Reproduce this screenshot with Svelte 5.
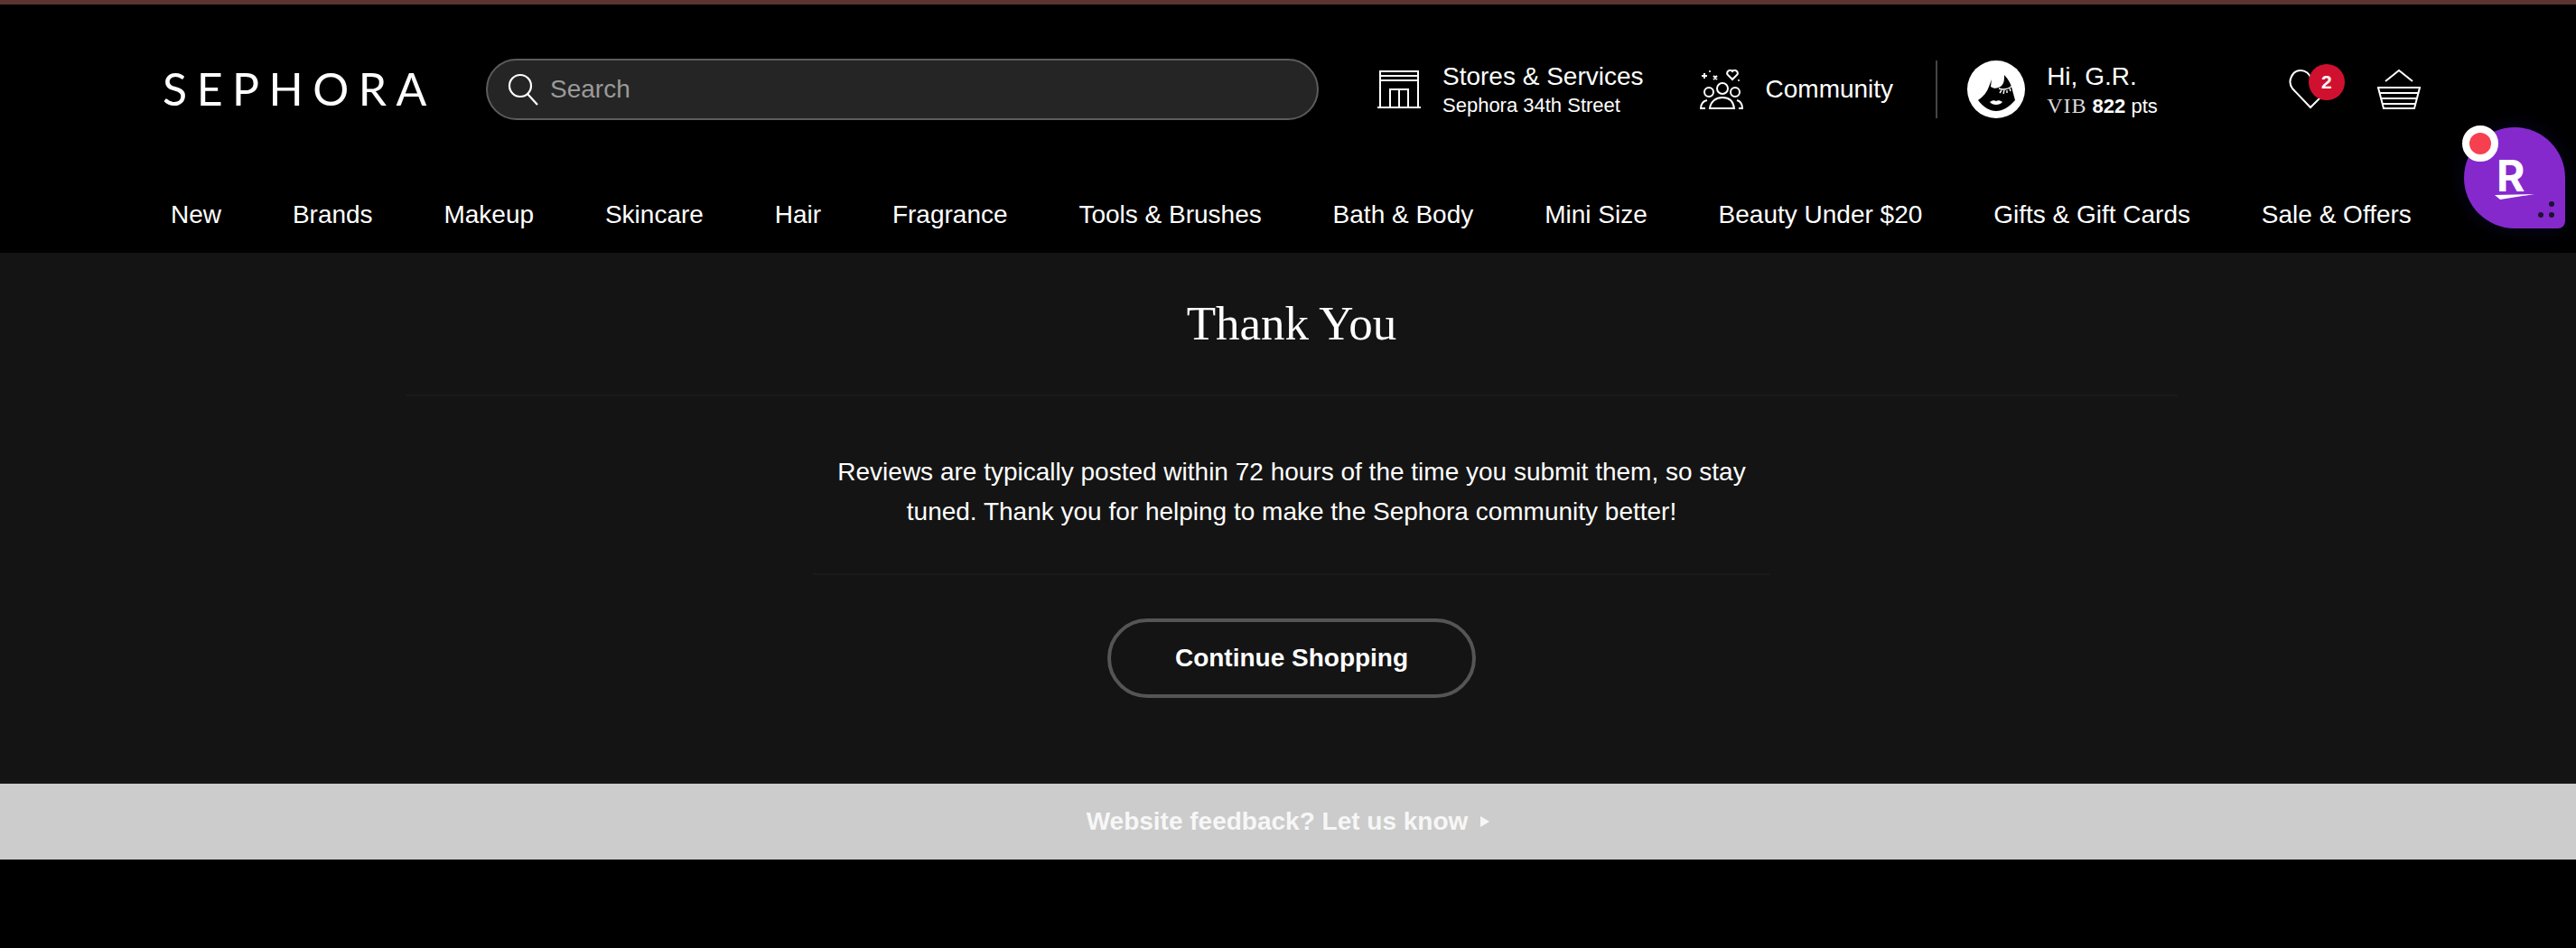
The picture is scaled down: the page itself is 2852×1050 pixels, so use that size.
<script>
  const navItems = [
    "New", "Brands", "Makeup", "Skincare", "Hair", "Fragrance", "Tools & Brushes",
    "Bath & Body", "Mini Size", "Beauty Under $20", "Gifts & Gift Cards", "Sale & Offers"
  ];
</script>

<div class="page">
  <header class="site-header">
    <div class="top-row">
      <div class="logo">SEPHORA</div>

      <div class="search">
        <svg class="search-icon" viewBox="0 0 34 36" width="34" height="36" fill="none" stroke="#fff" stroke-width="2.2">
          <circle cx="14" cy="14" r="12" />
          <path d="M22 23 L33 35" />
        </svg>
        <span class="placeholder">Search</span>
      </div>

      <div class="link stores">
        <svg viewBox="0 0 48 42" width="48" height="42" fill="none" stroke="#fff" stroke-width="2">
          <path d="M0 41 H48 M3 41 V1 H45 V41 M3 6 H45 M3 11 H45" />
          <path d="M14 41 V21 H34 V41 M24 21 V41" />
        </svg>
        <div class="link-text">
          <div class="link-main">Stores &amp; Services</div>
          <div class="link-sub">Sephora 34th Street</div>
        </div>
      </div>

      <div class="link community">
        <svg viewBox="0 0 48 44" width="48" height="44" fill="none" stroke="#fff" stroke-width="2">
          <path d="M2 7 H8 M5 4 V10 M15 7 L19 11 M19 7 L15 11" />
          <circle cx="11" cy="2" r="1" fill="#fff" stroke="none" />
          <circle cx="43" cy="12" r="1" fill="#fff" stroke="none" />
          <path d="M36 11 L30.5 5.5 A3.3 3.3 0 0 1 36 2 A3.3 3.3 0 0 1 41.5 5.5 Z" />
          <circle cx="10" cy="25" r="5" />
          <circle cx="25" cy="21" r="6" />
          <circle cx="39" cy="25" r="5" />
          <path d="M11 43 C12 35 18 31 25 31 C32 31 37 35 38 43 Z" />
          <path d="M6 43 H1 C1 38 4 35 8 34 M43 43 H47 C47 38 45 35 41 34" />
        </svg>
        <span class="link-main">Community</span>
      </div>

      <div class="vr"></div>

      <div class="link account">
        <svg viewBox="0 0 64 64" width="64" height="64">
          <circle cx="32" cy="32" r="32" fill="#fff" />
          <path d="M12 44 C18 40 22 35 24 29 L27 21 L26 29 C30 32 34 31 38 28 C41 25 41 21 41 16 C46 21 49 27 50 33 L53 44 C46 52 39 56 32 56 C25 56 18 52 12 44 Z" fill="#000" />
          <path d="M35 31 C40 33 45 32 50 28 M38 33 L36 36 M41 33 L40 37 M44 33 L44 36 M47 31 L48 34" fill="none" stroke="#fff" stroke-width="1.4" />
          <path d="M25 46 C28 44 30 44 32 45 C34 44 36 44 39 46 C36 50 28 50 25 46 Z" fill="#fff" />
        </svg>
        <div class="link-text">
          <div class="link-main">Hi, G.R.</div>
          <div class="link-sub"><span class="vib">VIB</span> <b>822</b> pts</div>
        </div>
      </div>

      <div class="heart">
        <svg viewBox="0 0 42 44" width="42" height="44" fill="none" stroke="#fff" stroke-width="2">
          <path d="M36 30 L24 42 L4 21 C-2 13 4 1 13 1 C19 1 23 5 24 9" />
        </svg>
        <span class="badge">2</span>
      </div>

      <svg class="basket" viewBox="0 0 48 44" width="48" height="44" fill="none" stroke="#fff" stroke-width="2">
        <path d="M9 13 L24 1 L39 13" />
        <path d="M1 20 H47 L41 43 H7 Z M3 26 H45 M4 32 H44 M6 38 H42" />
      </svg>
    </div>

    <nav class="nav">
      {#each navItems as item}
        <span>{item}</span>
      {/each}
    </nav>
  </header>

  <main class="content">
    <h1>Thank You</h1>
    <div class="rule wide"></div>
    <p>Reviews are typically posted within 72 hours of the time you submit them, so stay tuned. Thank you for helping to make the Sephora community better!</p>
    <div class="rule narrow"></div>
    <button class="continue">Continue Shopping</button>
  </main>

  <div class="feedback">
    <span>Website feedback? Let us know</span>
    <i class="arrow"></i>
  </div>

  <div class="rakuten">
    <span class="r">R</span>
    <svg class="swoosh" viewBox="0 0 44 6" width="44" height="6"><path d="M0 1 L44 0 L6 6 Z" fill="#fff" /></svg>
    <i class="dot d1"></i>
    <i class="dot d2"></i>
    <i class="dot d3"></i>
    <span class="rec"></span>
  </div>
</div>

<style>
  :global(body) {
    margin: 0;
    background: #000;
  }

  .page {
    position: relative;
    min-height: 1050px;
    background: #000;
    color: #fff;
    font-family: "Liberation Sans", Arial, sans-serif;
  }

  /* Header */
  .site-header {
    height: 275px;
    border-top: 5px solid #5a3530;
    background: #000;
  }

  .top-row {
    display: flex;
    align-items: center;
    height: 188px;
    padding-left: 180px;
  }

  .logo {
    width: 358px;
    margin-top: -3px;
    font-family: Lato, sans-serif;
    font-size: 50px;
    letter-spacing: 10.5px;
    line-height: 1;
  }

  .search {
    display: flex;
    align-items: center;
    box-sizing: border-box;
    width: 922px;
    height: 68px;
    padding-left: 22px;
    border: 2px solid #5c5c5c;
    border-radius: 34px;
    background: #252525;
  }

  .search-icon {
    margin-right: 13px;
  }

  .placeholder {
    color: #9a9a9a;
    font-size: 28px;
  }

  .link {
    display: flex;
    align-items: center;
  }

  .link-text {
    display: flex;
    flex-direction: column;
    gap: 4px;
    padding-top: 2px;
  }

  .link-main {
    font-size: 28px;
    line-height: 30px;
  }

  .link-sub {
    font-size: 22px;
    line-height: 26px;
  }

  .stores {
    margin-left: 65px;
    gap: 24px;
  }

  .community {
    margin-left: 62px;
    gap: 25px;
  }

  .vr {
    width: 2px;
    height: 64px;
    margin-left: 47px;
    background: #444;
  }

  .account {
    margin-left: 33px;
    gap: 24px;
  }

  .vib {
    font-family: "Liberation Serif", serif;
    font-size: 24px;
    letter-spacing: 1px;
    color: #ddd;
  }

  .heart {
    position: relative;
    width: 42px;
    height: 44px;
    margin-left: 145px;
  }

  .heart svg {
    display: block;
  }

  .badge {
    position: absolute;
    top: -6px;
    left: 22px;
    width: 40px;
    height: 40px;
    border-radius: 50%;
    background: #cf112f;
    font-size: 21px;
    font-weight: 700;
    line-height: 40px;
    text-align: center;
  }

  .basket {
    margin-left: 56px;
  }

  .nav {
    display: flex;
    justify-content: space-between;
    margin: 0 182px 0 189px;
    font-size: 28px;
    line-height: 90px;
  }

  /* Main */
  .content {
    display: flex;
    flex-direction: column;
    align-items: center;
    height: 588px;
    padding-left: 8px;
    background: #141414;
  }

  h1 {
    margin: 48px 0 0;
    font-family: "Liberation Serif", serif;
    font-size: 53px;
    font-weight: 400;
    line-height: 60px;
  }

  .rule {
    height: 2px;
    background: #1a1a1a;
  }

  .wide {
    width: 1962px;
    margin-top: 49px;
  }

  .narrow {
    width: 1060px;
  }

  p {
    width: 1040px;
    margin: 62px 0 46px;
    font-size: 28px;
    line-height: 44px;
    text-align: center;
  }

  .continue {
    width: 408px;
    height: 88px;
    margin-top: 48px;
    border: 4px solid #555;
    border-radius: 44px;
    background: transparent;
    color: #fff;
    font-family: inherit;
    font-size: 28px;
    font-weight: 700;
  }

  /* Feedback */
  .feedback {
    display: flex;
    align-items: center;
    justify-content: center;
    gap: 14px;
    height: 84px;
    background: #ccc;
    color: #f7f7f7;
    font-size: 28px;
    font-weight: 700;
  }

  .arrow {
    width: 0;
    height: 0;
    border-top: 6px solid transparent;
    border-bottom: 6px solid transparent;
    border-left: 10px solid #f7f7f7;
  }

  /* Rakuten floating button */
  .rakuten {
    position: absolute;
    top: 141px;
    left: 2728px;
    width: 112px;
    height: 112px;
    border-radius: 56px 56px 8px 56px;
    background: #8529cd;
    box-shadow: 0 0 24px rgba(16, 16, 70, 0.5);
  }

  .r {
    position: absolute;
    top: 30px;
    left: 36px;
    font-family: Inter, sans-serif;
    font-size: 48px;
    font-weight: 700;
    line-height: 1;
  }

  .swoosh {
    position: absolute;
    top: 74px;
    left: 34px;
  }

  .dot {
    position: absolute;
    width: 6px;
    height: 6px;
    border-radius: 50%;
    background: #1c1230;
  }

  .d1 { top: 82px; left: 94px; }
  .d2 { top: 94px; left: 82px; }
  .d3 { top: 94px; left: 94px; }

  .rec {
    position: absolute;
    top: -2px;
    left: -2px;
    box-sizing: border-box;
    width: 40px;
    height: 40px;
    border: 8px solid #fff;
    border-radius: 50%;
    background: #f64050;
  }
</style>
